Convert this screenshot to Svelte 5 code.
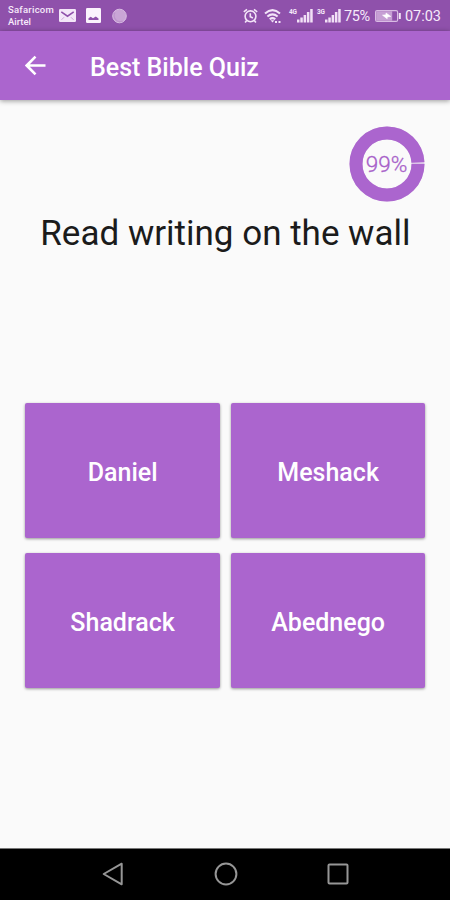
<script lang="ts">
  const question = 'Read writing on the wall';
  const answers = ['Daniel', 'Meshack', 'Shadrack', 'Abednego'];
  const progress = 99;

  // ring geometry, the stroke is centred on the radius
  const radius = 31;
  const circumference = 2 * Math.PI * radius;
  const filled = (circumference * progress) / 100;
</script>

<div class="screen">
  <div class="statusBar">
    <div class="carriers">
      <span class="carrier">Safaricom</span>
      <span class="carrier airtel">Airtel</span>
    </div>
    <svg class="mail" width="17" height="13" viewBox="0 0 17 13">
      <rect width="17" height="13" rx="1.2" fill="#f3e6f8" />
      <path d="m2.3 2.8 6.2 4.4 6.2-4.4" fill="none" stroke="#8f51ab" stroke-width="1.6" />
      <path d="m2.5 10.8 2.6-2.6M14.5 10.8l-2.6-2.6" fill="none" stroke="#c8a3d6" stroke-width="1" />
    </svg>
    <svg class="photo" width="15" height="15" viewBox="0 0 15 15">
      <rect width="15" height="15" rx="1.2" fill="#fbf3fd" />
      <path d="M2.5 12V10.3l2.2-1.5L7 10.3l2.8-1.7 2.7 2V12z" fill="#8f51ab" />
    </svg>
    <svg class="disc" width="15" height="16" viewBox="0 0 15 16">
      <circle cx="7.5" cy="8" r="6.8" fill="#c9a5d6" stroke="#d9bce3" />
      <path d="M3 4.5a6 6 0 0 0 7.5 8.6" fill="none" stroke="#bd93cc" stroke-width="1.2" />
    </svg>

    <div class="indicators">
      <svg width="15" height="16" viewBox="0 0 15 16" fill="none" stroke="#f3e4f8" stroke-width="1.6">
        <circle cx="7.5" cy="8.3" r="5.4" />
        <path d="M7.3 5.2v3.5l2.6 1.3M.8 3.9 4 1.3M14.2 3.9 11 1.3M3.7 12.5 2.1 14.6M11.3 12.5l1.6 2.1" />
      </svg>
      <svg class="wifi" width="18" height="16" viewBox="0 0 18 16" fill="none" stroke="#f3e4f8" stroke-width="2">
        <path d="M1 5.4q7.5-6.6 15 0M3.4 8.5q5.1-4.3 10.2 0M5.7 11.3q2.8-2.4 5.6 0" />
        <path d="m6.5 12.2 2 2.2 2-2.2z" fill="#f3e4f8" stroke="none" />
        <path d="M11 14h2M14.5 14h2" stroke-width="1.8" />
      </svg>
      {#each ['4G', '3G'] as network}
        <div class="signal">
          <span class="network">{network}</span>
          <svg width="16" height="15" viewBox="0 0 16 15" fill="#f1e0f6">
            <rect x="0" y="11.5" width="2.5" height="3" />
            <rect x="3.3" y="9.5" width="2.5" height="5" />
            <rect x="6.6" y="7" width="2.5" height="7.5" />
            <rect x="9.9" y="4" width="2.5" height="10.5" />
            <rect x="13.2" y="1" width="2.5" height="13.5" />
          </svg>
        </div>
      {/each}
      <span class="percent">75%</span>
      <svg class="battery" width="26" height="12" viewBox="0 0 26 12">
        <rect x=".6" y=".6" width="22" height="10.8" rx="1.5" fill="none" stroke="#d9bce4" stroke-width="1.2" />
        <rect x="1.2" y="1.2" width="16" height="9.6" fill="#c69fd4" />
        <path d="M7.5 5.2 11 4.8V3l4.8 3.4-3.6.5v1.9z" fill="#fff" stroke="#fff" stroke-width=".6" />
        <path d="M24.8 3v6" stroke="#f3e4f8" stroke-width="2" />
      </svg>
      <span class="clock">07:03</span>
    </div>
  </div>

  <header class="appBar">
    <svg width="21" height="21" viewBox="0 0 21 21" fill="none" stroke="#fff" stroke-width="2.6">
      <path d="M20.5 10.5H2.5M10.5 1.7l-8.8 8.8 8.8 8.8" />
    </svg>
    <h1>Best Bible Quiz</h1>
  </header>

  <main>
    <div class="progress">
      <svg width="76" height="76" viewBox="0 0 76 76">
        <circle cx="38" cy="38" r={radius} fill="none" stroke="#dcc4e8" stroke-width="13" />
        <circle
          cx="38"
          cy="38"
          r={radius}
          fill="none"
          stroke="#ab65ce"
          stroke-width="13"
          stroke-dasharray="{filled} {circumference}"
        />
        <text x="37.5" y="46" text-anchor="middle">{progress}%</text>
      </svg>
    </div>

    <h2>{question}</h2>

    <div class="answers">
      {#each answers as answer}
        <button>{answer}</button>
      {/each}
    </div>
  </main>

  <nav>
    <svg width="22" height="24" viewBox="0 0 22 24">
      <path d="M19.7 1.7v20.6L1.7 12z" />
    </svg>
    <svg width="24" height="24" viewBox="0 0 24 24">
      <circle cx="12" cy="12" r="10.4" />
    </svg>
    <svg width="22" height="22" viewBox="0 0 22 22">
      <rect x="1.5" y="1.5" width="19" height="19" rx="1" />
    </svg>
  </nav>
</div>

<style>
  :global(body) {
    margin: 0;
  }

  .screen {
    display: flex;
    flex-direction: column;
    width: 450px;
    height: 900px;
    overflow: hidden;
    background-color: #fafafa;
    font-family: Roboto, sans-serif;
  }

  svg {
    display: block;
    flex-shrink: 0;
  }

  .statusBar {
    display: flex;
    align-items: center;
    box-sizing: border-box;
    height: 31px;
    padding: 0 9px 0 8px;
    background-color: #8f51ab;
    color: #f6eafa;
  }

  .carriers {
    display: flex;
    flex-direction: column;
    width: 51px;
    font-size: 9.5px;
    font-weight: 500;
    line-height: 12px;
    letter-spacing: 0.25px;
  }

  .airtel {
    letter-spacing: 0;
  }

  .photo {
    margin-left: 10px;
  }

  .disc {
    margin-left: 11px;
  }

  .indicators {
    display: flex;
    align-items: center;
    margin-left: auto;
  }

  .wifi {
    margin-left: 6px;
  }

  .signal {
    display: flex;
    margin-left: 7px;
  }

  .signal + .signal {
    margin-left: 4px;
  }

  .network {
    width: 8px;
    font-size: 6.5px;
    font-weight: 700;
    line-height: 8px;
  }

  .percent {
    width: 27px;
    margin-left: 3px;
    padding-top: 1px;
    font-size: 14.5px;
    letter-spacing: -0.3px;
  }

  .battery {
    margin-left: 4px;
  }

  .clock {
    margin-left: 4px;
    padding-top: 1px;
    font-size: 14.5px;
  }

  .appBar {
    display: flex;
    align-items: center;
    box-sizing: border-box;
    height: 69px;
    padding: 0 25px 0 25px;
    background-color: #ab65ce;
    box-shadow: 0 1px 5px rgba(0, 0, 0, 0.4);
    color: #fff;
  }

  h1 {
    margin: 3px 0 0 44px;
    font-size: 25px;
    font-weight: 500;
  }

  main {
    flex: 1;
    padding: 26px 24.6px 0 25.4px;
  }

  .progress {
    display: flex;
    justify-content: flex-end;
  }

  .progress text {
    fill: #a760c9;
    font-size: 22.5px;
    font-weight: 300;
    stroke: #a760c9;
    stroke-width: 0.3;
  }

  h2 {
    height: 169px;
    margin: 11px 0 21px;
    color: #1b1b1b;
    font-size: 35px;
    font-weight: 400;
    line-height: 42px;
    text-align: center;
    white-space: nowrap;
  }

  .answers {
    display: grid;
    grid-template-columns: 1fr 1fr;
    grid-auto-rows: 135px;
    gap: 15px 11px;
  }

  button {
    padding: 3px 0 0;
    border: 0;
    border-radius: 2px;
    background-color: #ab65ce;
    box-shadow: 0 1px 3px rgba(0, 0, 0, 0.4);
    color: #fff;
    font-family: inherit;
    font-size: 25px;
    font-weight: 500;
  }

  nav {
    display: flex;
    align-items: center;
    justify-content: space-between;
    box-sizing: border-box;
    height: 52px;
    padding: 0 101px 1px 102px;
    border-top: 1px solid #777;
    background-color: #000;
  }

  nav svg {
    fill: none;
    stroke: #969696;
    stroke-width: 2;
    stroke-linejoin: round;
  }
</style>
